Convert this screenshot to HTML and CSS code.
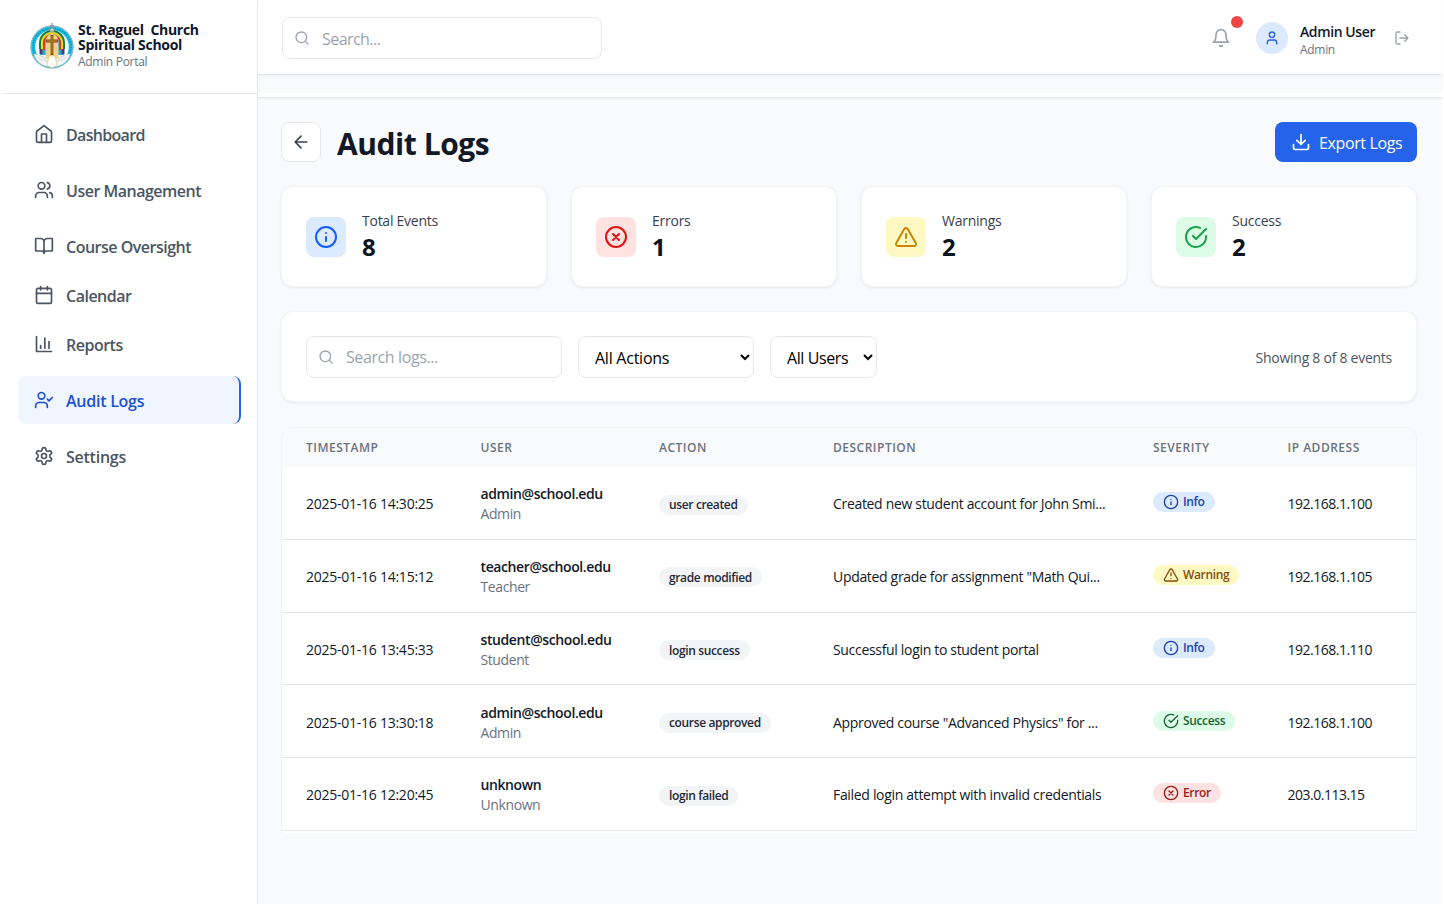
FILE: index.html
```html
<!DOCTYPE html>
<html lang="en">
<head>
<meta charset="utf-8">
<title>Audit Logs</title>
<link rel="stylesheet" href="styles.css">
</head>
<body>
<svg class="sprite" aria-hidden="true">
  <symbol id="home" viewBox="0 0 24 24"><path d="M3 9l9-7 9 7v11a2 2 0 0 1-2 2H5a2 2 0 0 1-2-2z"/><path d="M9 22V12h6v10"/></symbol>
  <symbol id="users" viewBox="0 0 24 24"><path d="M16 21v-2a4 4 0 0 0-4-4H6a4 4 0 0 0-4 4v2"/><circle cx="9" cy="7" r="4"/><path d="M22 21v-2a4 4 0 0 0-3-3.87M16 3.13a4 4 0 0 1 0 7.75"/></symbol>
  <symbol id="book" viewBox="0 0 24 24"><path d="M2 3h6a4 4 0 0 1 4 4v14a3 3 0 0 0-3-3H2zM22 3h-6a4 4 0 0 0-4 4v14a3 3 0 0 1 3-3h7z"/></symbol>
  <symbol id="calendar" viewBox="0 0 24 24"><rect x="3" y="4" width="18" height="18" rx="2"/><path d="M16 2v4M8 2v4M3 10h18"/></symbol>
  <symbol id="chart" viewBox="0 0 24 24"><path d="M3 3v18h18M18 17V9M13 17V5M8 17v-3"/></symbol>
  <symbol id="usercheck" viewBox="0 0 24 24"><path d="M16 21v-2a4 4 0 0 0-4-4H6a4 4 0 0 0-4 4v2"/><circle cx="9" cy="7" r="4"/><path d="M16 11l2 2 4-4"/></symbol>
  <symbol id="gear" viewBox="0 0 24 24"><path d="M12.22 2h-.44a2 2 0 0 0-2 2v.18a2 2 0 0 1-1 1.73l-.43.25a2 2 0 0 1-2 0l-.15-.08a2 2 0 0 0-2.73.73l-.22.38a2 2 0 0 0 .73 2.73l.15.1a2 2 0 0 1 1 1.72v.51a2 2 0 0 1-1 1.74l-.15.09a2 2 0 0 0-.73 2.73l.22.38a2 2 0 0 0 2.73.73l.15-.08a2 2 0 0 1 2 0l.43.25a2 2 0 0 1 1 1.73V20a2 2 0 0 0 2 2h.44a2 2 0 0 0 2-2v-.18a2 2 0 0 1 1-1.73l.43-.25a2 2 0 0 1 2 0l.15.08a2 2 0 0 0 2.73-.73l.22-.39a2 2 0 0 0-.73-2.73l-.15-.08a2 2 0 0 1-1-1.74v-.5a2 2 0 0 1 1-1.74l.15-.09a2 2 0 0 0 .73-2.73l-.22-.38a2 2 0 0 0-2.73-.73l-.15.08a2 2 0 0 1-2 0l-.43-.25a2 2 0 0 1-1-1.73V4a2 2 0 0 0-2-2z"/><circle cx="12" cy="12" r="3"/></symbol>
  <symbol id="search" viewBox="0 0 24 24"><circle cx="11" cy="11" r="8"/><path d="M21 21l-4.3-4.3"/></symbol>
  <symbol id="bell" viewBox="0 0 24 24"><path d="M6 8a6 6 0 0 1 12 0c0 7 3 9 3 9H3s3-2 3-9M10.3 21a1.94 1.94 0 0 0 3.4 0"/></symbol>
  <symbol id="user" viewBox="0 0 24 24"><path d="M19 21v-2a4 4 0 0 0-4-4H9a4 4 0 0 0-4 4v2"/><circle cx="12" cy="7" r="4"/></symbol>
  <symbol id="logout" viewBox="0 0 24 24"><path d="M9 21H5a2 2 0 0 1-2-2V5a2 2 0 0 1 2-2h4M16 17l5-5-5-5M21 12H9"/></symbol>
  <symbol id="back" viewBox="0 0 24 24"><path d="M12 19l-7-7 7-7M19 12H5"/></symbol>
  <symbol id="download" viewBox="0 0 24 24"><path d="M21 15v4a2 2 0 0 1-2 2H5a2 2 0 0 1-2-2v-4M7 10l5 5 5-5M12 15V3"/></symbol>
  <symbol id="info" viewBox="0 0 24 24"><circle cx="12" cy="12" r="10"/><path d="M12 16v-4M12 8h.01"/></symbol>
  <symbol id="error" viewBox="0 0 24 24"><circle cx="12" cy="12" r="10"/><path d="M15 9l-6 6M9 9l6 6"/></symbol>
  <symbol id="warning" viewBox="0 0 24 24"><path d="M21.73 18l-8-14a2 2 0 0 0-3.48 0l-8 14A2 2 0 0 0 4 21h16a2 2 0 0 0 1.73-3M12 9v4M12 17h.01"/></symbol>
  <symbol id="success" viewBox="0 0 24 24"><path d="M22 11.08V12a10 10 0 1 1-5.93-9.14M22 4L12 14.01l-3-3"/></symbol>
</svg>

<div class="app">
  <aside class="sidebar">
    <div class="brand">
      <svg class="logo" viewBox="0 0 44 46">
        <circle cx="22" cy="24" r="21.200" fill="#e9f6f8" stroke="#7f9296" stroke-width=".8"/>
        <circle cx="22" cy="24" r="18.800" fill="#f4fbfc" stroke="#18bde6" stroke-width="4"/>
        <circle cx="22" cy="24" r="18.800" fill="none" stroke="#0c7d9e" stroke-width="1.300" stroke-dasharray="1 1.600"/>
        <path d="M10 32V20a12 12 0 0 1 24 0v12z" fill="#2fa4e0"/>
        <path d="M10 26v-6a12 12 0 0 1 24 0v6" fill="none" stroke="#1f7a35" stroke-width="2"/>
        <path d="M12 27v-7a10 10 0 0 1 20 0v7" fill="none" stroke="#f3d51f" stroke-width="2"/>
        <path d="M14 27v-7a8 8 0 0 1 16 0v7" fill="none" stroke="#d4382c" stroke-width="2"/>
        <path d="M15.500 36V19a6.500 8 0 0 1 13 0v17z" fill="#ecd48a"/>
        <path d="M9.500 26h3v5h-3zM31.500 26h3v5h-3z" fill="#4a4358"/>
        <path d="M4 31c5 0 9 3 12 7l6-3 6 3c3-4 7-7 12-7-1 7-9 13-18 13S5 38 4 31z" fill="#f4f5f2" stroke="#c3ced0" stroke-width=".6"/>
        <path d="M8 34l5 4M12 33l4 6M36 34l-5 4M32 33l-4 6" stroke="#b0bfc4" stroke-width=".6"/>
        <path d="M19 33h6l2 9-5 3-5-3z" fill="#fffdf5" stroke="#d7b96a" stroke-width=".5"/>
        <path d="M22 12v20M16 18h12" stroke="#7a4f16" stroke-width="2.800"/>
        <path d="M22 13v18M17 18h10" stroke="#b57a2a" stroke-width="1.300"/>
        <path d="M22 0v8M20 3h4" stroke="#8d9690" stroke-width="1.300"/>
        <circle cx="22" cy="7" r="2.200" fill="#c5c9b8" stroke="#7d8783" stroke-width=".7"/>
      </svg>
      <div>
        <div class="brand-name">St. Raguel&nbsp; Church<br>Spiritual School</div>
        <div class="brand-sub">Admin Portal</div>
      </div>
    </div>
    <nav class="nav">
      <a class="nav-item tight"><svg class="icon"><use href="#home"/></svg><span>Dashboard</span></a>
      <a class="nav-item"><svg class="icon"><use href="#users"/></svg><span>User Management</span></a>
      <a class="nav-item"><svg class="icon"><use href="#book"/></svg><span>Course Oversight</span></a>
      <a class="nav-item compact"><svg class="icon"><use href="#calendar"/></svg><span>Calendar</span></a>
      <a class="nav-item compact"><svg class="icon"><use href="#chart"/></svg><span>Reports</span></a>
      <a class="nav-item loose active"><svg class="icon"><use href="#usercheck"/></svg><span>Audit Logs</span></a>
      <a class="nav-item loose"><svg class="icon"><use href="#gear"/></svg><span>Settings</span></a>
    </nav>
  </aside>

  <div class="content">
    <header class="topbar">
      <label class="search top-search"><svg class="icon sm"><use href="#search"/></svg><span>Search...</span></label>
      <div class="account">
        <div class="bell"><svg class="icon"><use href="#bell"/></svg><i class="dot"></i></div>
        <div class="avatar"><svg class="icon sm"><use href="#user"/></svg></div>
        <div class="who"><div class="who-name">Admin User</div><div class="who-role">Admin</div></div>
        <svg class="icon sm"><use href="#logout"/></svg>
      </div>
    </header>
    <div class="strip"></div>

    <main class="page">
      <div class="page-head">
        <button class="back"><svg class="icon"><use href="#back"/></svg></button>
        <h1>Audit Logs</h1>
        <button class="export"><svg class="icon"><use href="#download"/></svg><span>Export Logs</span></button>
      </div>

      <section class="stats">
        <div class="card stat"><div class="tile blue"><svg class="icon lg"><use href="#info"/></svg></div><div><div class="stat-label">Total Events</div><div class="stat-value">8</div></div></div>
        <div class="card stat"><div class="tile red"><svg class="icon lg"><use href="#error"/></svg></div><div><div class="stat-label">Errors</div><div class="stat-value">1</div></div></div>
        <div class="card stat"><div class="tile yellow"><svg class="icon lg"><use href="#warning"/></svg></div><div><div class="stat-label">Warnings</div><div class="stat-value">2</div></div></div>
        <div class="card stat"><div class="tile green"><svg class="icon lg"><use href="#success"/></svg></div><div><div class="stat-label">Success</div><div class="stat-value">2</div></div></div>
      </section>

      <section class="card filters">
        <label class="search log-search"><svg class="icon sm"><use href="#search"/></svg><span>Search logs...</span></label>
        <select class="select actions"><option>All Actions</option></select>
        <select class="select people"><option>All Users</option></select>
        <div class="count">Showing 8 of 8 events</div>
      </section>

      <section class="card table">
        <div class="row head"><span>TIMESTAMP</span><span>USER</span><span>ACTION</span><span>DESCRIPTION</span><span>SEVERITY</span><span>IP ADDRESS</span></div>
        <div class="row"><div class="time">2025-01-16 14:30:25</div><div><div class="mail">admin@school.edu</div><div class="role">Admin</div></div><div><span class="chip">user created</span></div><div class="desc">Created new student account for John Smi...</div><div class="severity"><span class="badge blue"><svg class="icon sm"><use href="#info"/></svg><span>Info</span></span></div><div class="ip">192.168.1.100</div></div>
        <div class="row"><div class="time">2025-01-16 14:15:12</div><div><div class="mail">teacher@school.edu</div><div class="role">Teacher</div></div><div><span class="chip">grade modified</span></div><div class="desc">Updated grade for assignment "Math Qui...</div><div class="severity"><span class="badge yellow"><svg class="icon sm"><use href="#warning"/></svg><span>Warning</span></span></div><div class="ip">192.168.1.105</div></div>
        <div class="row"><div class="time">2025-01-16 13:45:33</div><div><div class="mail">student@school.edu</div><div class="role">Student</div></div><div><span class="chip">login success</span></div><div class="desc">Successful login to student portal</div><div class="severity"><span class="badge blue"><svg class="icon sm"><use href="#info"/></svg><span>Info</span></span></div><div class="ip">192.168.1.110</div></div>
        <div class="row"><div class="time">2025-01-16 13:30:18</div><div><div class="mail">admin@school.edu</div><div class="role">Admin</div></div><div><span class="chip">course approved</span></div><div class="desc">Approved course "Advanced Physics" for ...</div><div class="severity"><span class="badge green"><svg class="icon sm"><use href="#success"/></svg><span>Success</span></span></div><div class="ip">192.168.1.100</div></div>
        <div class="row"><div class="time">2025-01-16 12:20:45</div><div><div class="mail">unknown</div><div class="role">Unknown</div></div><div><span class="chip">login failed</span></div><div class="desc">Failed login attempt with invalid credentials</div><div class="severity"><span class="badge red"><svg class="icon sm"><use href="#error"/></svg><span>Error</span></span></div><div class="ip">203.0.113.15</div></div>
      </section>
    </main>
  </div>
</div>
</body>
</html>
```
FILE: styles.css
```css
* { box-sizing: border-box; }
body {
  margin: 0;
  background: #fff;
  color: #111827;
  font-family: "Open Sans", "Noto Sans", sans-serif;
  font-size: 14px;
  line-height: 20px;
  letter-spacing: -.3px;
}
.sprite { position: absolute; width: 0; height: 0; }
.icon { width: 20px; height: 20px; flex: none; fill: none; stroke: currentColor; stroke-width: 2; stroke-linecap: round; stroke-linejoin: round; }
.icon.sm { width: 16px; height: 16px; }
.icon.lg { width: 24px; height: 24px; }
button, select { font: inherit; letter-spacing: inherit; }

.app { display: flex; width: 1442px; height: 904px; }
.sidebar { width: 258px; flex: none; background: #fff; border-right: 1px solid #e9ebee; }
.brand { display: flex; align-items: flex-start; gap: 4px; height: 94px; margin-left: 2px; padding: 23px 0 0 28px; border-bottom: 1px solid #e5e7eb; }
.logo { width: 44px; height: 46px; }
.brand-name { margin-top: -1px; font-weight: 700; font-size: 14px; line-height: 15px; color: #0f172a; }
.brand-sub { margin-top: 2px; font-size: 12px; line-height: 16px; color: #6b7280; }
.nav { display: flex; flex-direction: column; gap: 8px; padding: 16px 16px 0 18px; }
.nav-item { display: flex; align-items: center; gap: 12px; height: 48px; padding: 0 16px; border-radius: 8px; color: #4b5563; font-weight: 600; font-size: 16px; letter-spacing: -.5px; }
.nav-item span { padding-top: 2px; }
.nav-item.tight { letter-spacing: -.68px; }
.nav-item.loose { letter-spacing: -.25px; }
.nav-item.compact { height: 41px; padding-bottom: 7px; }
.nav-item.active { background: #eff6ff; color: #1d4ed8; border-right: 2px solid #2563eb; }

.content { flex: 1; background: #f9fafb; }
.topbar { display: flex; align-items: center; justify-content: space-between; height: 75px; padding: 2px 32px 0 24px; background: #fff; border-bottom: 1px solid #e5e7eb; box-shadow: 0 1px 2px rgba(0, 0, 0, .05); }
.strip { height: 23px; border-bottom: 1px solid #e5e7eb; background: linear-gradient(#f9fafb 18px, #fff 18px); box-shadow: inset 0 2px 2px -1px rgba(0, 0, 0, .05), 0 1px 2px rgba(0, 0, 0, .05); }
.search { display: flex; align-items: center; gap: 12px; height: 42px; padding: 0 11px; border: 1px solid #e5e7eb; border-radius: 8px; background: #fff; color: #9ca3af; font-size: 16px; letter-spacing: -.4px; }
.top-search { width: 320px; letter-spacing: -.55px; }
.search span { padding-top: 1px; }
.account { display: flex; align-items: center; color: #9ca3af; }
.bell { position: relative; height: 20px; margin-right: 25px; }
.dot { position: absolute; left: 20px; top: -12px; width: 12px; height: 12px; border-radius: 50%; background: #ef4444; }
.avatar { display: flex; align-items: center; justify-content: center; width: 32px; height: 32px; margin-right: 12px; border-radius: 50%; background: #dbeafe; color: #2563eb; }
.who { width: 94px; padding-top: 3px; }
.who-name { font-weight: 600; color: #111827; letter-spacing: -.4px; }
.who-role { font-size: 12px; line-height: 16px; color: #6b7280; }

.page { padding: 24px 25px 0 23px; }
.page-head { display: flex; align-items: center; height: 40px; }
.back { display: flex; align-items: center; justify-content: center; width: 40px; height: 40px; padding: 0; border: 1px solid #e5e7eb; border-radius: 8px; background: #fff; color: #374151; }
h1 { margin: 0 auto 0 16px; padding-top: 4px; font-size: 30px; line-height: 36px; font-weight: 700; letter-spacing: -.45px; color: #111827; }
.export { display: flex; align-items: center; gap: 8px; width: 142px; height: 40px; padding: 0 16px; border: 0; border-radius: 8px; background: #2563eb; color: #fff; font-size: 16px; letter-spacing: -.37px; white-space: nowrap; }
.export span { padding-top: 1px; }
.card { border: 1px solid #f3f4f6; border-radius: 12px; background: #fff; box-shadow: 0 1px 3px rgba(0, 0, 0, .07); }
.stats { display: grid; grid-template-columns: repeat(4, 1fr); gap: 24px; margin-top: 24px; }
.stat { display: flex; align-items: center; gap: 16px; height: 101px; padding: 0 24px; }
.tile { width: 40px; height: 40px; padding: 8px; border-radius: 8px; }
.tile.blue { background: #dbeafe; color: #155dfc; }
.tile.red { background: #fee2e2; color: #dc1414; }
.tile.yellow { background: #fef9c3; color: #ca8504; }
.tile.green { background: #dcfce7; color: #16a34a; }
.stat-label { padding-top: 1px; color: #374151; letter-spacing: -.25px; }
.stat-value { font-size: 24px; line-height: 32px; font-weight: 700; color: #0b1220; }

.filters { display: flex; align-items: center; gap: 16px; height: 91px; margin-top: 24px; padding: 0 24px; }
.log-search { width: 256px; }
.select { height: 42px; padding: 2px 0 0 12px; border: 1px solid #e5e7eb; border-radius: 8px; background: #fff; color: #000; font-size: 16px; }
.actions { width: 176px; letter-spacing: -.25px; }
.people { width: 107px; letter-spacing: -.4px; }
.count { margin-left: auto; padding-top: 2px; color: #4b5563; letter-spacing: -.26px; }

.table { height: 406px; margin-top: 25px; border-bottom: 0; border-radius: 12px 12px 0 0; overflow: hidden; box-shadow: none; }
.row { display: grid; grid-template-columns: 174.5px 178.5px 174px 320px 134.5px 1fr; align-items: center; height: 72.75px; border-bottom: 1px solid #e5e7eb; padding: 3px 0 0 24px; white-space: nowrap; }
.row.head { height: 39px; padding-top: 1px; border: 0; background: #f9fafb; color: #6b7280; font-size: 12px; font-weight: 600; letter-spacing: .5px; }
.time { letter-spacing: -.25px; }
.mail { font-weight: 600; letter-spacing: -.4px; }
.role { color: #6b7280; letter-spacing: -.4px; }
.desc { letter-spacing: -.32px; }
.ip { letter-spacing: -.5px; }
.chip, .badge { display: inline-flex; align-items: center; gap: 4px; height: 20px; padding: 0 10px; border-radius: 10px; font-size: 12px; font-weight: 600; letter-spacing: -.36px; }
.chip { padding-top: 1px; background: #f3f4f6; color: #1f2937; }
.severity { padding-bottom: 1px; }
.badge.blue { background: #dbeafe; color: #1e40af; }
.badge.yellow { background: #fef9c3; color: #854d0e; }
.badge.green { background: #dcfce7; color: #166534; }
.badge.red { background: #fee2e2; color: #991b1b; }
```
